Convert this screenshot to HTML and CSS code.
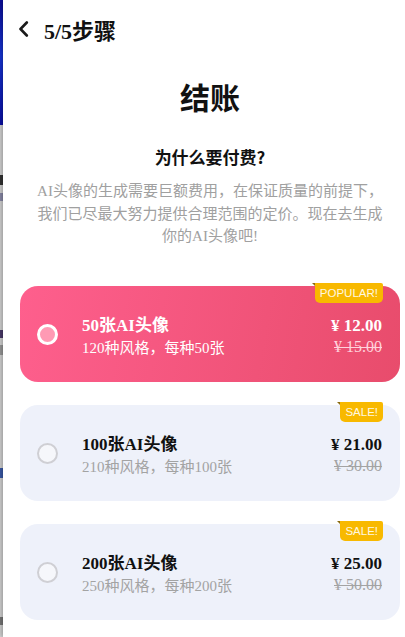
FILE: index.html
```html
<!DOCTYPE html>
<html lang="zh-CN">
<head>
    <meta charset="UTF-8">
    <meta name="viewport" content="width=device-width, initial-scale=1.0">
    <title>结账</title>
    <link rel="stylesheet" href="styles.css">
</head>
<body>
    <div class="behind">
        <div class="behind-top"></div>
        <div class="behind-rest">
            <span class="mark m1"></span>
            <span class="mark m2"></span>
            <span class="mark m3"></span>
            <span class="mark m4"></span>
            <span class="mark m5"></span>
            <span class="mark m6"></span>
        </div>
    </div>

    <div class="panel">
        <div class="header">
            <svg class="back" width="12" height="16" viewBox="0 0 12 16">
                <path d="M8.8 1.5 L2.5 8 L8.8 14.5" fill="none" stroke="#1a1a1a" stroke-width="2.6" stroke-linecap="round" stroke-linejoin="round"/>
            </svg>
            <span class="step">5/5步骤</span>
        </div>

        <h1 class="title">结账</h1>
        <h2 class="why">为什么要付费?</h2>
        <p class="desc">AI头像的生成需要巨额费用，在保证质量的前提下，我们已尽最大努力提供合理范围的定价。现在去生成你的AI头像吧!</p>

        <div class="plans">
            <div class="plan active">
                <span class="badge">POPULAR!</span>
                <span class="radio"></span>
                <div class="info">
                    <div class="name">50张AI头像</div>
                    <div class="sub">120种风格，每种50张</div>
                </div>
                <div class="price">
                    <div class="now">¥ 12.00</div>
                    <div class="old">¥ 15.00</div>
                </div>
            </div>

            <div class="plan">
                <span class="badge">SALE!</span>
                <span class="radio"></span>
                <div class="info">
                    <div class="name">100张AI头像</div>
                    <div class="sub">210种风格，每种100张</div>
                </div>
                <div class="price">
                    <div class="now">¥ 21.00</div>
                    <div class="old">¥ 30.00</div>
                </div>
            </div>

            <div class="plan">
                <span class="badge">SALE!</span>
                <span class="radio"></span>
                <div class="info">
                    <div class="name">200张AI头像</div>
                    <div class="sub">250种风格，每种200张</div>
                </div>
                <div class="price">
                    <div class="now">¥ 25.00</div>
                    <div class="old">¥ 50.00</div>
                </div>
            </div>
        </div>
    </div>
</body>
</html>
```

FILE: styles.css
```css
* {
    margin: 0;
    padding: 0;
    box-sizing: border-box;
}

body {
    display: flex;
    min-height: 637px;
    background-color: #fff;
    font-family: "Liberation Serif", "Noto Sans CJK SC", serif;
    overflow: hidden;
}

/* page underneath the sheet, only a sliver shows */
.behind {
    width: 3px;
    flex-shrink: 0;
    display: flex;
    flex-direction: column;
}

.behind-top {
    height: 125px;
    background: linear-gradient(180deg, #0b0e9c, #1736d8 45%, #0a0fa6);
}

.behind-rest {
    flex: 1;
    position: relative;
    background-color: #d4d4d4;
}

.mark {
    position: absolute;
    left: 0;
    width: 3px;
    background-color: #333;
}

.m1 { top: 50px; height: 10px; }
.m2 { top: 68px; height: 8px; background-color: #8a8aa8; }
.m3 { top: 205px; height: 8px; background-color: #4a3a6a; }
.m4 { top: 220px; height: 10px; background-color: #999; }
.m5 { top: 343px; height: 10px; background-color: #3a5aa8; }
.m6 { top: 492px; height: 8px; background-color: #777; }

.panel {
    flex: 1;
    background-color: #fff;
    box-shadow: -2px 0 4px rgba(0, 0, 0, 0.25);
    padding: 0 5px 0 17px;
    position: relative;
}

.header {
    display: flex;
    align-items: center;
    height: 60px;
    padding-bottom: 2px;
}

.back {
    margin-left: -2px;
    margin-right: 14px;
}

.step {
    font-size: 22px;
    font-weight: bold;
    color: #111;
}

.title {
    text-align: center;
    font-family: "Noto Sans CJK SC", sans-serif;
    font-size: 30px;
    font-weight: bold;
    color: #111;
    line-height: 1.3;
    margin-top: 17px;
}

.why {
    text-align: center;
    font-family: "Noto Sans CJK SC", sans-serif;
    font-size: 17px;
    font-weight: bold;
    color: #111;
    margin-top: 30px;
    line-height: 1.3;
}

.desc {
    text-align: center;
    font-size: 15px;
    line-height: 22.5px;
    color: #a0a0a0;
    margin: 12px 14px 0 14px;
}

.plans {
    display: flex;
    flex-direction: column;
    gap: 23px;
    margin-top: 38px;
}

.plan {
    position: relative;
    display: flex;
    align-items: flex-start;
    height: 96px;
    padding: 29px 18px 0 17px;
    border-radius: 18px;
    background-color: #eef1fa;
}

.plan.active {
    background: linear-gradient(100deg, #fe5f8d, #e84c6c);
}

.radio {
    width: 21px;
    height: 21px;
    margin-top: 9px;
    border-radius: 50%;
    border: 2px solid #cfcfd4;
    background-color: #f6f7fb;
    flex-shrink: 0;
}

.active .radio {
    border: 3px solid #fff;
    background-color: #ff9ab4;
}

.info {
    flex: 1;
    margin-left: 24px;
}

.name {
    font-size: 17px;
    font-weight: bold;
    color: #111;
    line-height: 22px;
}

.sub {
    font-size: 15px;
    color: #a3a3a3;
    line-height: 22px;
}

.price {
    text-align: right;
}

.now {
    font-size: 17px;
    font-weight: bold;
    color: #111;
    line-height: 22px;
}

.old {
    font-size: 16px;
    color: #a3a3a3;
    text-decoration: line-through;
    line-height: 20px;
}

.active .name,
.active .sub,
.active .now {
    color: #fff;
}

.active .old {
    color: #ffd2dc;
}

.badge {
    position: absolute;
    top: -3px;
    right: 17px;
    height: 20px;
    padding: 0 5px;
    line-height: 20px;
    font-family: "Liberation Sans", Arial, sans-serif;
    font-size: 11.5px;
    color: #fff8e0;
    background-color: #f8b900;
    border-radius: 0 2px 5px 5px;
}

.badge::before {
    content: "";
    position: absolute;
    left: -3px;
    top: 0;
    border-style: solid;
    border-width: 0 3px 3px 0;
    border-color: transparent #8a6a10 transparent transparent;
}
```
